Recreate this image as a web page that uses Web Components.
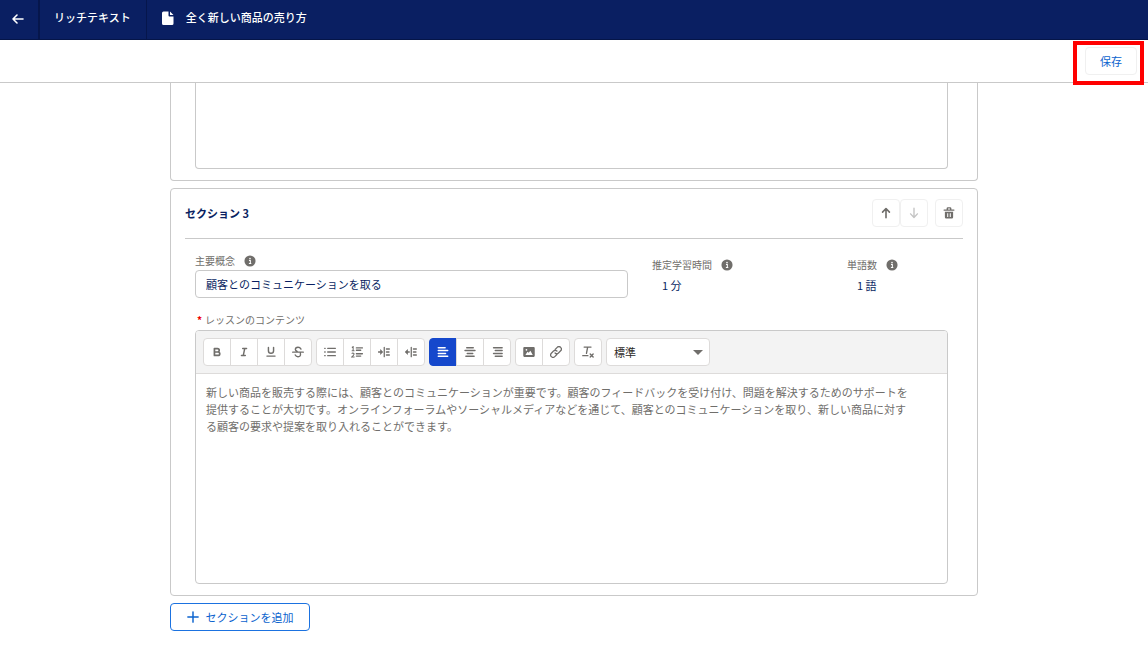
<!DOCTYPE html>
<html lang="ja">
<head>
<meta charset="utf-8">
<meta name="viewport" content="width=device-width, initial-scale=1">
<title>全く新しい商品の売り方</title>
<style>
:root{--navy:#0a1f62;--line:#c9c9c9;--soft:#dddbda;--grey:#706e6b;--blue:#0b63ce}
body{margin:0;background:#fff;color:var(--navy);font:11px/17px "Noto Sans CJK JP",sans-serif}
</style>
</head>
<body>
<lesson-page></lesson-page>
<script>
const define = (name, html, setup) => customElements.define(name, class extends HTMLElement {
  connectedCallback() {
    if (this.shadowRoot) return;
    const t = document.createElement('template');
    t.innerHTML = html;
    this.attachShadow({mode: 'open'}).append(t.content.cloneNode(true));
    if (setup) setup.call(this, this.shadowRoot);
  }
});

const icons = {
  back: '<path d="M7 3 3 7l4 4M3 7h10" fill="none" stroke="currentColor" stroke-width="1.6" stroke-linecap="round" stroke-linejoin="round"/>',
  file: '<path d="M2.5.5h5v4q0 1 1 1h4v7q0 1.5-1.5 1.5h-8.500q-1.500 0-1.500-1.500v-10.500q0-1.500 1.500-1.500zM9 .6l3.500 3.500h-3q-.5 0-.5-.5z" fill="currentColor"/>',
  info: '<circle cx="7" cy="7" r="6.500" fill="currentColor"/><circle cx="7" cy="4.300" r=".95" fill="#fff"/><path d="M5.800 6.300h1.600v3.500M5.700 10h2.800" fill="none" stroke="#fff" stroke-width="1.200"/>',
  up: '<path d="M7 12.500V2M3 6 7 1.800 11 6" fill="none" stroke="currentColor" stroke-width="1.900" stroke-linecap="round" stroke-linejoin="round"/>',
  down: '<path d="M7 1.500V12M3 8 7 12.200 11 8" fill="none" stroke="currentColor" stroke-width="1.600" stroke-linecap="round" stroke-linejoin="round"/>',
  trash: '<path d="M5 2.800V1.700q0-.7.7-.7h2.600q.7 0 .7.7v1.100M1.300 3.600h11.400" fill="none" stroke="currentColor" stroke-width="1.600" stroke-linecap="round"/><path fill-rule="evenodd" d="M2.200 5.600h9.600v6.400q0 1.400-1.400 1.400H3.600q-1.400 0-1.400-1.400zM4.900 7.200v4.500h1.200V7.200zm3 0v4.500h1.200V7.200z" fill="currentColor"/>',
  plus: '<path d="M7 1v12M1 7h12" fill="none" stroke="currentColor" stroke-width="1.700" stroke-linecap="round"/>',
  bold: '<path d="M4 3h3.600a2 2 0 0 1 0 4H4zM4 7h4.200a2 2 0 0 1 0 4H4z" fill="none" stroke="currentColor" stroke-width="2" stroke-linejoin="round"/>',
  italic: '<path d="M5.500 2.800h4.500M4 11.200h4.500M7.900 2.800 6.100 11.200" fill="none" stroke="currentColor" stroke-width="1.700" stroke-linecap="round"/>',
  underline: '<path d="M4 1.800v3.700a3 3 0 0 0 6 0V1.800M2.300 11.800h9.400" fill="none" stroke="currentColor" stroke-width="1.700" stroke-linecap="round"/>',
  strike: '<path d="M10.500 3.600Q9.300 1.500 7 1.500 3.900 1.500 3.900 4.200 3.900 5.500 6 6.300M.8 7.200h12.400M9.800 8.500q.8 4-2.800 4-2.300 0-3.200-2" fill="none" stroke="currentColor" stroke-width="1.600" stroke-linecap="round"/>',
  bullets: '<path d="M4.300 2.700h9M4.300 7h9M4.300 11.300h9M.8 2.700h.6M.8 7h.6M.8 11.300h.6" fill="none" stroke="currentColor" stroke-width="1.500" stroke-linecap="round"/>',
  numbers: '<path d="M6.300 2.200h7M6.300 5h5M6.300 9h7M6.300 11.800h5" fill="none" stroke="currentColor" stroke-width="1.600" stroke-linecap="round"/><path d="M1 1.700 2.500.8v4.500M.8 5.500h3.300M.8 9q1.400-1.400 2.600-.2.900 1.100-2.400 4h3.200" fill="none" stroke="currentColor" stroke-width="1.200"/>',
  indent: '<path d="M.5 7H4M3.300 5.300 5 7 3.300 8.700zM7.300 1.500v11M9.800 3.500h3.500M9.800 7h3M9.800 10.500h3.500" fill="none" stroke="currentColor" stroke-width="1.500" stroke-linecap="round"/>',
  outdent: '<path d="M2 7H5M2.600 5.300.9 7l1.700 1.700zM7.300 1.500v11M9.800 3.500h3.500M9.800 7h3M9.800 10.500h3.500" fill="none" stroke="currentColor" stroke-width="1.500" stroke-linecap="round"/>',
  left: '<path d="M1.500 2h8M1.500 5.300h11M1.500 8.700h8.500M1.500 12h11" fill="none" stroke="currentColor" stroke-width="1.700" stroke-linecap="round"/>',
  center: '<path d="M3.200 2h7.600M1.200 5.300h11.600M3.800 8.700h6.400M2.200 12h9.600" fill="none" stroke="currentColor" stroke-width="1.700" stroke-linecap="round"/>',
  right: '<path d="M3 2h10M5 5.300h8M3 8.700h10M5 12h8" fill="none" stroke="currentColor" stroke-width="1.700" stroke-linecap="round"/>',
  image: '<path fill-rule="evenodd" d="M1.500 1.300h11q1.200 0 1.200 1.200v9q0 1.200-1.200 1.200h-11q-1.200 0-1.200-1.200v-9q0-1.200 1.200-1.200zM2.800 10.500h8.600L8.600 5.600 6.700 8 5.200 6.700zM4 3.500a1 1 0 1 0 0 2 1 1 0 1 0 0-2z" fill="currentColor"/>',
  link: '<path d="M6 4 8.400 1.600a2.800 2.800 0 0 1 4 4L9.900 8.100a2.800 2.800 0 0 1-4 0M8 10 5.600 12.400a2.800 2.800 0 0 1-4-4L4.100 5.900a2.800 2.800 0 0 1 4 0" fill="none" stroke="currentColor" stroke-width="1.500" stroke-linecap="round"/>',
  clear: '<path d="M2.500 1.300h8M6.600 1.300 5.200 8.500M.9 11.300h6M9.600 9.300l3.400 3.600M13 9.300l-3.400 3.600" fill="none" stroke="currentColor" stroke-width="1.600" stroke-linecap="round"/>'
};

define('ui-icon', `<style>:host{display:block;flex:none;width:12px;height:12px}svg{display:block;width:100%;height:100%}</style><svg viewBox="0 0 14 14" aria-hidden="true"></svg>`,
  function (root) { root.querySelector('svg').innerHTML = icons[this.getAttribute('name')]; });

define('app-header', `<style>
:host{display:block}
header{display:flex;height:40px;box-sizing:border-box;background:var(--navy);border-bottom:1px solid #051548;color:#fff;font-weight:500}
a,div{display:flex;align-items:center;box-sizing:border-box;padding:0 15px 4px 14px;color:#fff;text-decoration:none}
a{width:40px;justify-content:center;padding:0 4px 2px 0;border-right:2px solid #06164c}
.kind{border-right:1px solid #06164c}
.name{gap:11px}
ui-icon{width:14px;height:14px}
</style><header><a href="#" aria-label="戻る"><ui-icon name="back"></ui-icon></a><div class="kind">リッチテキスト</div><div class="name"><ui-icon name="file"></ui-icon><span>全く新しい商品の売り方</span></div></header>`);

define('action-bar', `<style>
:host{display:block}
.bar{display:flex;justify-content:flex-end;align-items:flex-start;box-sizing:border-box;height:43px;padding:7px 11px 0;border-bottom:1px solid var(--line)}
.mark{position:relative}
.mark::after{content:"";position:absolute;inset:-6px -7px -10px -12px;border:4px solid #f00;pointer-events:none}
button{display:block;width:52px;height:28px;padding:0;border:1px solid #f0f0f0;border-radius:4px;background:#fff;color:var(--blue);font:inherit}
</style><div class="bar"><div class="mark"><button type="button">保存</button></div></div>`);

define('section-card', `<style>
:host{display:block;box-sizing:border-box;border:1px solid var(--line);border-radius:4px;padding:10px 14px 11px}
:host([continued]){border-top:0;border-radius:0 0 4px 4px;padding-top:0}
.head{display:flex;align-items:center;height:28px;padding-bottom:11px;border-bottom:1px solid var(--line)}
:host([continued]) .head{display:none}
h2{flex:1;margin:0;font:inherit;font-weight:700}
.body{padding:0 15px 0 10px}
</style><div class="head"><h2><slot name="title"></slot></h2><slot name="actions"></slot></div><div class="body"><slot></slot></div>`);

define('section-actions', `<style>
:host{display:flex}
button{display:grid;place-items:center;width:28px;height:28px;padding:0;border:1px solid #f0f0f0;border-radius:4px;background:#fff;color:var(--grey)}
button:disabled{color:#c4c4c4}
button:last-child{margin-left:7px}
</style><button type="button" aria-label="上へ移動"><ui-icon name="up"></ui-icon></button><button type="button" aria-label="下へ移動" disabled><ui-icon name="down"></ui-icon></button><button type="button" aria-label="削除"><ui-icon name="trash"></ui-icon></button>`);

define('section-fields', `<style>
:host{display:grid;grid-template-columns:433fr 171fr 101fr;column-gap:24px;padding-top:13px}
label,.label{display:flex;align-items:center;gap:9px;color:var(--grey);font-size:10px}
input{display:block;box-sizing:border-box;width:100%;height:28px;margin-top:1px;padding:0 10px;border:1px solid var(--line);border-radius:4px;color:var(--navy);font:inherit}
.fact{padding-top:4px}
.value{padding:4px 10px 0}
</style><div><label for="concept">主要概念<ui-icon name="info"></ui-icon></label><input id="concept" type="text" value="顧客とのコミュニケーションを取る"></div>
<div class="fact"><div class="label">推定学習時間<ui-icon name="info"></ui-icon></div><div class="value">1 分</div></div>
<div class="fact"><div class="label">単語数<ui-icon name="info"></ui-icon></div><div class="value">1 語</div></div>`);

define('tool-group', `<style>
:host{display:flex}
button{display:grid;place-items:center;box-sizing:border-box;width:28px;height:28px;margin:0 0 0 -1px;padding:0;border:1px solid var(--soft);background:#fff;color:var(--grey)}
button:first-of-type{margin-left:0;border-radius:4px 0 0 4px}
button:last-of-type{border-radius:0 4px 4px 0}
button:only-of-type{border-radius:4px}
button[aria-pressed=true]{background:#1548cc;border-color:#1548cc;color:#fff}
</style>`, function (root) {
  for (const item of this.getAttribute('tools').split(' ')) {
    const [name, label] = item.split(':');
    const b = document.createElement('button');
    b.type = 'button';
    b.setAttribute('aria-label', label);
    if (this.getAttribute('active') === name) b.setAttribute('aria-pressed', 'true');
    b.innerHTML = `<ui-icon name="${name}"></ui-icon>`;
    root.append(b);
  }
});

define('rich-editor', `<style>
:host{display:block;border:1px solid var(--line);border-radius:4px;overflow:hidden}
:host([plain]){border-top:0;border-radius:0 0 4px 4px}
.tools{display:flex;flex-wrap:wrap;gap:4px;padding:7px;background:#f3f3f3;border-bottom:1px solid var(--soft)}
:host([plain]) .tools{display:none}
.pick{position:relative;width:104px}
select{appearance:none;box-sizing:border-box;width:100%;height:28px;padding:0 7px;border:1px solid var(--soft);border-radius:4px;background:#fff;color:#2b2826;font:inherit}
.pick::after{content:"";position:absolute;right:7px;top:12px;border:5px solid transparent;border-top-color:var(--grey);border-bottom:0;pointer-events:none}
.text{box-sizing:border-box;min-height:209px;padding:10px;color:var(--grey);outline:0}
:host([plain]) .text{min-height:85px}
</style><div class="tools"><tool-group tools="bold:太字 italic:斜体 underline:下線 strike:取り消し線"></tool-group><tool-group tools="bullets:箇条書き numbers:番号付きリスト indent:インデント outdent:インデント解除"></tool-group><tool-group active="left" tools="left:左揃え center:中央揃え right:右揃え"></tool-group><tool-group tools="image:画像 link:リンク"></tool-group><tool-group tools="clear:書式をクリア"></tool-group><div class="pick"><select aria-label="段落の書式"><option>標準</option></select></div></div>
<div class="text" contenteditable="true" role="textbox" aria-multiline="true" aria-label="レッスンのコンテンツ"><slot></slot></div>`);

define('add-section', `<style>
:host{display:block}
button{display:flex;align-items:center;justify-content:center;gap:7px;width:140px;height:28px;padding:0;border:1px solid #1b72e0;border-radius:4px;background:#fff;color:var(--blue);font:inherit}
</style><button type="button"><ui-icon name="plus"></ui-icon><slot></slot></button>`);

define('lesson-page', `<style>
:host{display:block}
main{display:flex;flex-direction:column;gap:7px;box-sizing:border-box;max-width:808px;margin:0 auto}
.caption{display:flex;gap:3px;margin-top:13px;margin-bottom:2px;padding-left:2px;color:var(--grey);font-size:10px}
.caption b{color:#e00}
</style><app-header></app-header><action-bar></action-bar>
<main><section-card continued><rich-editor plain></rich-editor></section-card>
<section-card><span slot="title">セクション 3</span><section-actions slot="actions"></section-actions>
<section-fields></section-fields>
<div class="caption"><b>*</b><span>レッスンのコンテンツ</span></div>
<rich-editor>新しい商品を販売する際には、顧客とのコミュニケーションが重要です。顧客のフィードバックを受け付け、問題を解決するためのサポートを<br>提供することが大切です。オンラインフォーラムやソーシャルメディアなどを通じて、顧客とのコミュニケーションを取り、新しい商品に対す<br>る顧客の要求や提案を取り入れることができます。</rich-editor>
</section-card><add-section>セクションを追加</add-section></main>`);
</script>
</body>
</html>
